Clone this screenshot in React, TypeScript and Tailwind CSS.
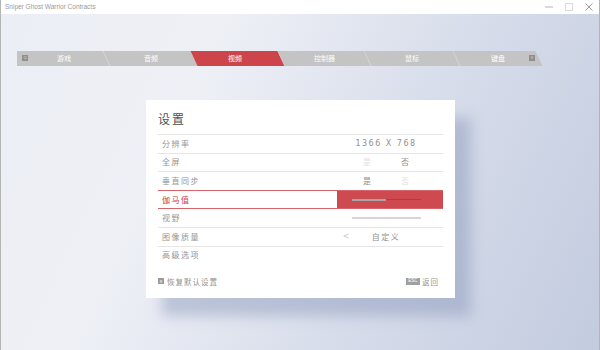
import React from 'react';

const cjk = { fontFamily: '"Noto Sans CJK SC", "Noto Sans", sans-serif' };

type Tab = { label: string; w: string; active?: boolean };

const tabs: Tab[] = [
  { label: '游戏', w: 'w-[98px] -ml-[8px] pl-[12px]' },
  { label: '音频', w: 'w-[87px]' },
  { label: '视频', w: 'w-[87px] pr-[6px]', active: true },
  { label: '控制器', w: 'w-[87px]' },
  { label: '鼠标', w: 'w-[89px]' },
  { label: '键盘', w: 'w-[82px]' },
];

function TitleBar() {
  return (
    <div className="flex h-[14px] items-center justify-between bg-white pl-[4px] pr-[6px]">
      <span className="text-[6.5px] text-[#999999]" style={{ fontFamily: '"Liberation Sans", sans-serif' }}>
        Sniper Ghost Warrior Contracts
      </span>
      <div className="flex items-center gap-[12px]">
        <svg width="8" height="8" viewBox="0 0 8 8">
          <line x1="0" y1="4" x2="8" y2="4" stroke="#b5b5b5" strokeWidth="1" />
        </svg>
        <svg width="8" height="8" viewBox="0 0 8 8">
          <rect x="0.5" y="0.5" width="7" height="7" fill="none" stroke="#dadada" strokeWidth="1" />
        </svg>
        <svg width="8" height="8" viewBox="0 0 8 8">
          <path d="M0.5 0.5 L7.5 7.5 M7.5 0.5 L0.5 7.5" stroke="#9a9a9a" strokeWidth="1" />
        </svg>
      </div>
    </div>
  );
}

function KeyBox({ k }: { k: string }) {
  return (
    <span className="flex h-[6px] w-[6px] items-center justify-center bg-[#8e8e8e] text-[4px] leading-none text-[#d8d8d8]">
      {k}
    </span>
  );
}

function TabBar() {
  return (
    <div className="relative ml-[16px] mt-[37px] h-[15px] w-[530px]">
      <div className="flex h-full overflow-hidden">
        {tabs.map((t, i) => (
          <div
            key={t.label}
            className={`${t.w} flex h-full shrink-0 skew-x-[25deg] items-center justify-center ${
              t.active ? 'bg-[#ce444b]' : 'bg-[#c4c4c4]'
            } ${i < tabs.length - 1 && !t.active && !tabs[i + 1].active ? 'border-r border-[#d6d6d6]' : ''}`}
          >
            <span className="-skew-x-[25deg] text-[7px] leading-none text-white" style={cjk}>
              {t.label}
            </span>
          </div>
        ))}
      </div>
      <div className="absolute left-[5px] top-[4px]">
        <KeyBox k="Q" />
      </div>
      <div className="absolute left-[512px] top-[4px]">
        <KeyBox k="E" />
      </div>
    </div>
  );
}

function YesNo({ yes }: { yes: boolean }) {
  return (
    <div className="flex justify-center gap-[30px] text-[8px]">
      <span className={yes ? 'text-[#8e8e8e]' : 'text-[#e2e2e2]'}>是</span>
      <span className={yes ? 'text-[#e2e2e2]' : 'text-[#8e8e8e]'}>否</span>
    </div>
  );
}

function Row({
  label,
  children,
  active,
  redTop,
}: {
  label: string;
  children?: React.ReactNode;
  active?: boolean;
  redTop?: boolean;
}) {
  return (
    <div
      className={`flex h-[18.6px] items-stretch border-t ${
        active || redTop ? 'border-[#d8646a]' : 'border-[#e6e6e6]'
      }`}
    >
      <div
        className={`flex flex-1 items-center pl-[4px] text-[8px] tracking-[1.5px] ${
          active ? 'text-[#c8434a]' : 'text-[#959595]'
        }`}
      >
        {label}
      </div>
      <div className={`flex w-[106px] items-center pr-[8px] ${active ? 'bg-[#cf4a50]' : ''}`}>
        <div className="w-full">{children}</div>
      </div>
    </div>
  );
}

function Panel() {
  return (
    <div
      className="ml-[145px] mt-[34px] flex h-[198px] w-[309px] flex-col bg-white px-[12px] shadow-[16px_18px_12px_rgba(125,140,178,0.4)]"
      style={cjk}
    >
      <div className="flex h-[34px] items-end pb-[8px]">
        <span className="text-[12px] leading-[14px] tracking-[2px] text-[#505050]">设置</span>
      </div>
      <div className="flex flex-col">
        <Row label="分辨率">
          <div className="text-center text-[8px] tracking-[1.5px] text-[#909090]" style={{ fontFamily: '"DejaVu Sans", sans-serif' }}>
            1366 X 768
          </div>
        </Row>
        <Row label="全屏">
          <YesNo yes={false} />
        </Row>
        <Row label="垂直同步">
          <YesNo yes={true} />
        </Row>
        <Row label="伽马值" active>
          <div className="mx-auto flex w-[69px] items-center">
            <div className="h-[2px] w-[34px] bg-[#a6a6a6]" />
            <div className="h-px flex-1 bg-[#b8383f]" />
          </div>
        </Row>
        <Row label="视野" redTop>
          <div className="mx-auto h-[2px] w-[69px] bg-[#d6d6d6]" />
        </Row>
        <Row label="图像质量">
          <div className="grid grid-cols-[18px_1fr_18px] items-center text-[8px]">
            <span className="text-center text-[#c4c4c4]" style={{ fontFamily: '"DejaVu Sans", sans-serif' }}>
              &lt;
            </span>
            <span className="text-center tracking-[1.5px] text-[#909090]">自定义</span>
            <span />
          </div>
        </Row>
        <Row label="高级选项" />
      </div>
      <div className="mt-auto flex items-center justify-between pb-[11px] pr-[4px] text-[7.5px] text-[#939393]">
        <div className="flex items-center gap-[3px]">
          <span className="flex h-[6px] w-[6px] items-center justify-center bg-[#9a9a9a] text-[4px] leading-none text-white">R</span>
          <span className="tracking-[1px]">恢复默认设置</span>
        </div>
        <div className="flex items-center gap-[2px]">
          <span className="flex h-[7px] w-[14px] items-center justify-center bg-[#a0a0a0] text-[4.5px] leading-none text-white" style={{ fontFamily: '"Liberation Sans", sans-serif' }}>
            ESC
          </span>
          <span className="tracking-[1px]">返回</span>
        </div>
      </div>
    </div>
  );
}

export default function App() {
  return (
    <div className="flex h-[350px] w-[600px] flex-col overflow-hidden border-x border-[#b4b4b4] bg-white">
      <TitleBar />
      <div className="flex-1 bg-[linear-gradient(115deg,#eceef5_0%,#eef0f6_30%,#d6dcea_65%,#c3cbdf_100%)]">
        <TabBar />
        <Panel />
      </div>
    </div>
  );
}
